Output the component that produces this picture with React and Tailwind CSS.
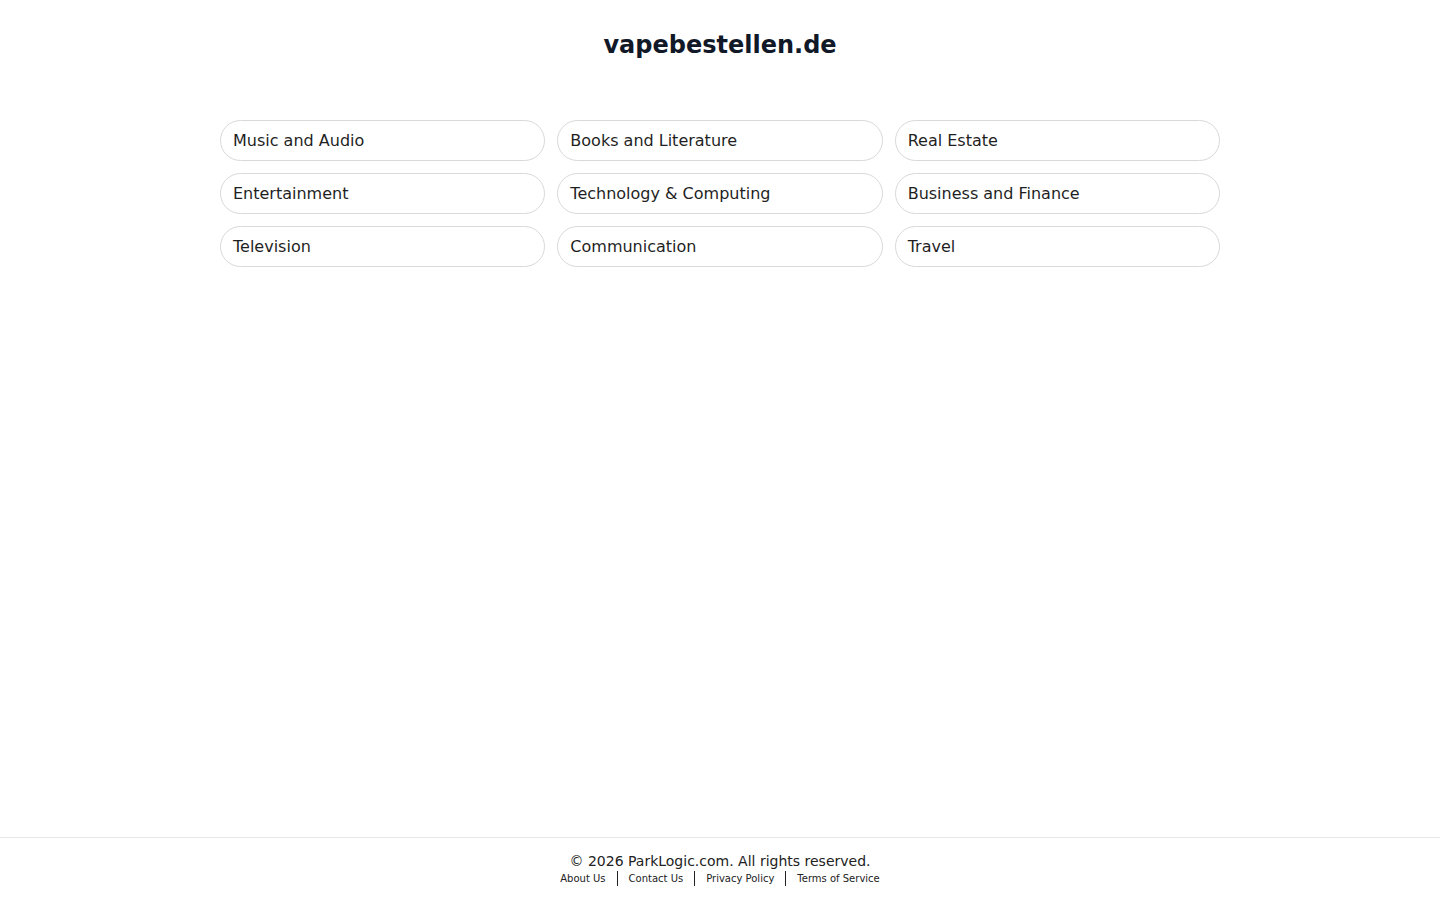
import React from "react";

const categories = [
  "Music and Audio",
  "Books and Literature",
  "Real Estate",
  "Entertainment",
  "Technology & Computing",
  "Business and Finance",
  "Television",
  "Communication",
  "Travel",
];

const links = ["About Us", "Contact Us", "Privacy Policy", "Terms of Service"];

export default function App() {
  return (
    <div className="flex min-h-screen flex-col bg-white font-['DejaVu_Sans',sans-serif] text-[#1f2937]">
      <main className="flex-grow">
        <h1 className="pt-[29px] text-center text-[24px] font-bold leading-[32px] text-[#111827]">vapebestellen.de</h1>
        <ul className="mx-auto mt-[59px] grid w-[1000px] grid-cols-3 gap-x-[12px] gap-y-[12px]">
          {categories.map((c) => (
            <li key={c}>
              <a href="#" className="flex h-[41px] items-center rounded-full border border-[#d9d9d9] px-[12px] text-[16px] text-[#1f1f1f]">
                {c}
              </a>
            </li>
          ))}
        </ul>
      </main>
      <footer className="flex h-[63px] flex-col items-center border-t border-[#e5e7eb] pt-[14px]">
        <p className="text-[14px] leading-[18px] text-[#222]">© 2026 ParkLogic.com. All rights reserved.</p>
        <div className="mt-[1px] flex items-center text-[10px] leading-[14px] text-[#222]">
          {links.map((l, i) => (
            <React.Fragment key={l}>
              {i > 0 && <span className="mx-[11px] h-[15px] border-l border-[#222]"></span>}
              <a href="#">{l}</a>
            </React.Fragment>
          ))}
        </div>
      </footer>
    </div>
  );
}
